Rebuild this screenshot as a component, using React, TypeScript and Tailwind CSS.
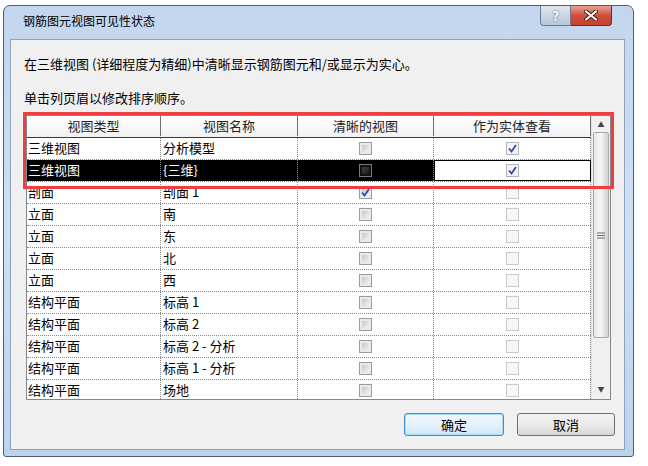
import React from 'react';

interface Row {
  type: string;
  name: string;
  clear: 'off' | 'on' | 'dark';
  solid: 'on' | 'disabled';
  selected?: boolean;
}

const rows: Row[] = [
  { type: '三维视图', name: '分析模型', clear: 'off', solid: 'on' },
  { type: '三维视图', name: '{三维}', clear: 'dark', solid: 'on', selected: true },
  { type: '剖面', name: '剖面 1', clear: 'on', solid: 'disabled' },
  { type: '立面', name: '南', clear: 'off', solid: 'disabled' },
  { type: '立面', name: '东', clear: 'off', solid: 'disabled' },
  { type: '立面', name: '北', clear: 'off', solid: 'disabled' },
  { type: '立面', name: '西', clear: 'off', solid: 'disabled' },
  { type: '结构平面', name: '标高 1', clear: 'off', solid: 'disabled' },
  { type: '结构平面', name: '标高 2', clear: 'off', solid: 'disabled' },
  { type: '结构平面', name: '标高 2 - 分析', clear: 'off', solid: 'disabled' },
  { type: '结构平面', name: '标高 1 - 分析', clear: 'off', solid: 'disabled' },
  { type: '结构平面', name: '场地', clear: 'off', solid: 'disabled' },
];

const font = { fontFamily: '"Noto Sans CJK SC", "Liberation Sans", sans-serif' };

function Check() {
  return (
    <svg width="9" height="9" viewBox="0 0 9 9" className="absolute left-[1px] top-[1px]">
      <path d="M1 4.5 L3.5 7.5 L8 1" fill="none" stroke="#3549b0" strokeWidth="1.8" />
    </svg>
  );
}

function Box({ kind }: { kind: 'off' | 'on' | 'dark' | 'solidOn' | 'disabled' }) {
  if (kind === 'dark') {
    return (
      <div className="w-[13px] h-[13px] border border-[#7a7a7a] bg-[#111] p-[2px]">
        <div className="w-full h-full bg-gradient-to-br from-[#444] to-[#1a1a1a]" />
      </div>
    );
  }
  if (kind === 'disabled') {
    return <div className="w-[13px] h-[13px] border border-[#c9c9c9] bg-[#f7f7f7]" />;
  }
  if (kind === 'solidOn') {
    return (
      <div className="relative w-[13px] h-[13px] border border-[#b4b4b4] bg-[#f4f4f4]">
        <Check />
      </div>
    );
  }
  return (
    <div className="relative w-[13px] h-[13px] border border-[#9c9c9c] bg-[#eaeaea] p-[2px]">
      <div className="w-full h-full bg-gradient-to-br from-[#c8c8c8] to-[#f2f2f2]" />
      {kind === 'on' && <Check />}
    </div>
  );
}

function App() {
  return (
    <div className="w-[648px] h-[466px] bg-white pt-[5px] pl-[3px] text-[13px] text-black" style={font}>
      <div className="w-[631px] h-[452px] rounded-t-[7px] rounded-b-[3px] border border-[#4e5d70] bg-gradient-to-b from-[#c3d6ee] via-[#cfe0f4] to-[#bcd3ee] flex flex-col pl-[6px] pr-[8px] pb-[6px]">
        <div className="h-[33px] flex justify-between">
          <div className="pl-[13px] pt-[7px] leading-[16px] text-[12px] text-black">钢筋图元视图可见性状态</div>
          <div className="flex self-start mr-[13px]">
            <div className="w-[31px] h-[20px] rounded-bl-[4px] border border-t-0 border-[#6d7a8c] bg-gradient-to-b from-[#dfe6ef] to-[#b8c6d8] flex items-center justify-center text-white font-bold text-[13px] leading-none" style={{ textShadow: '0 0 2px #3c4654' }}>
              ?
            </div>
            <div className="w-[41px] h-[20px] rounded-br-[4px] border border-t-0 border-l-0 border-[#6b2a22] bg-gradient-to-b from-[#e8a194] via-[#cf4e3c] to-[#c9402e] flex items-center justify-center">
              <svg width="14" height="11" viewBox="0 0 14 11">
                <path d="M2 1.5 L12 9.5 M12 1.5 L2 9.5" stroke="#4a1a14" strokeWidth="4" strokeLinecap="round" />
                <path d="M2 1.5 L12 9.5 M12 1.5 L2 9.5" stroke="#fff" strokeWidth="2.2" strokeLinecap="round" />
              </svg>
            </div>
          </div>
        </div>

        <div className="flex-1 border border-[#8da3bf] bg-[#f0f0f0] flex flex-col pl-[13px] pr-[9px]">
          <div className="mt-[16px] leading-[16px]">在三维视图 (详细程度为精细)中清晰显示钢筋图元和/或显示为实心。</div>
          <div className="mt-[18px] leading-[16px]">单击列页眉以修改排序顺序。</div>

          <div className="relative mt-[9px] ml-[2px] w-[585px]">
            <div className="h-[285px] border border-[#828790] bg-white flex overflow-hidden">
              <div className="w-[564px] flex flex-col">
                <div className="h-[22px] shrink-0 flex bg-gradient-to-b from-white to-[#f1f1f1] border-b border-[#3a3a3a] text-[#222] pb-[1px]">
                  <div className="w-[134px] border-r border-[#6f6f6f] flex items-center justify-center">视图类型</div>
                  <div className="w-[137px] border-r border-[#6f6f6f] flex items-center justify-center">视图名称</div>
                  <div className="w-[136px] border-r border-[#6f6f6f] flex items-center justify-center">清晰的视图</div>
                  <div className="flex-1 border-r border-[#6f6f6f] flex items-center justify-center">作为实体查看</div>
                </div>
                {rows.map((r, i) => (
                  <div key={i} className="h-[22px] shrink-0 flex border-b border-dotted border-[#8a8a8a]">
                    <div className={`w-[134px] border-r border-dotted border-[#8a8a8a] flex items-center pl-[1px] pb-[2px] ${r.selected ? 'bg-black text-white' : ''}`}>{r.type}</div>
                    <div className={`w-[137px] border-r border-dotted border-[#8a8a8a] flex items-center pl-[2px] pb-[2px] ${r.selected ? 'bg-black text-white' : ''}`}>{r.name}</div>
                    <div className={`w-[136px] border-r border-dotted border-[#8a8a8a] flex items-center justify-center ${r.selected ? 'bg-black' : ''}`}>
                      <Box kind={r.clear} />
                    </div>
                    <div className={`flex-1 border-r border-dotted border-[#8a8a8a] flex items-center justify-center ${r.selected ? 'border border-black border-solid' : ''}`}>
                      <Box kind={r.solid === 'on' ? 'solidOn' : 'disabled'} />
                    </div>
                  </div>
                ))}
              </div>
              <div className="w-[19px] bg-[#f0f0f0] border-l border-[#e2e2e2] flex flex-col items-center">
                <div className="h-[16px] w-full flex items-center justify-center text-[#444] text-[7px] leading-none">▲</div>
                <div className="w-[16px] h-[206px] rounded-[2px] border border-[#a8a8a8] bg-gradient-to-r from-[#e9e9e9] via-[#f6f6f6] to-[#d0d0d0] flex items-center justify-center">
                  <svg width="8" height="7" viewBox="0 0 8 7">
                    <path d="M0 1 H8 M0 3.5 H8 M0 6 H8" stroke="#6a6a6a" strokeWidth="1" />
                  </svg>
                </div>
                <div className="flex-1" />
                <div className="h-[20px] w-full flex items-center justify-center text-[#444] text-[7px] leading-none">▼</div>
              </div>
            </div>
            <div className="absolute -left-[3px] -top-[3px] w-[591px] h-[77px] border-[3px] border-[#ef3d40] pointer-events-none" />
          </div>

          <div className="mt-[13px] flex justify-end gap-[13px]">
            <div className="w-[100px] h-[23px] rounded-[3px] border border-[#3c8fd0] bg-gradient-to-b from-[#f2f8fd] via-[#e5f1fb] to-[#cfe5f6] shadow-[inset_0_0_0_1px_#a6dbf7] flex items-center justify-center">确定</div>
            <div className="w-[98px] h-[23px] rounded-[3px] border border-[#707070] bg-gradient-to-b from-[#f2f2f2] via-[#ebebeb] to-[#d6d6d6] flex items-center justify-center">取消</div>
          </div>
        </div>
      </div>
    </div>
  );
}

export default App;
